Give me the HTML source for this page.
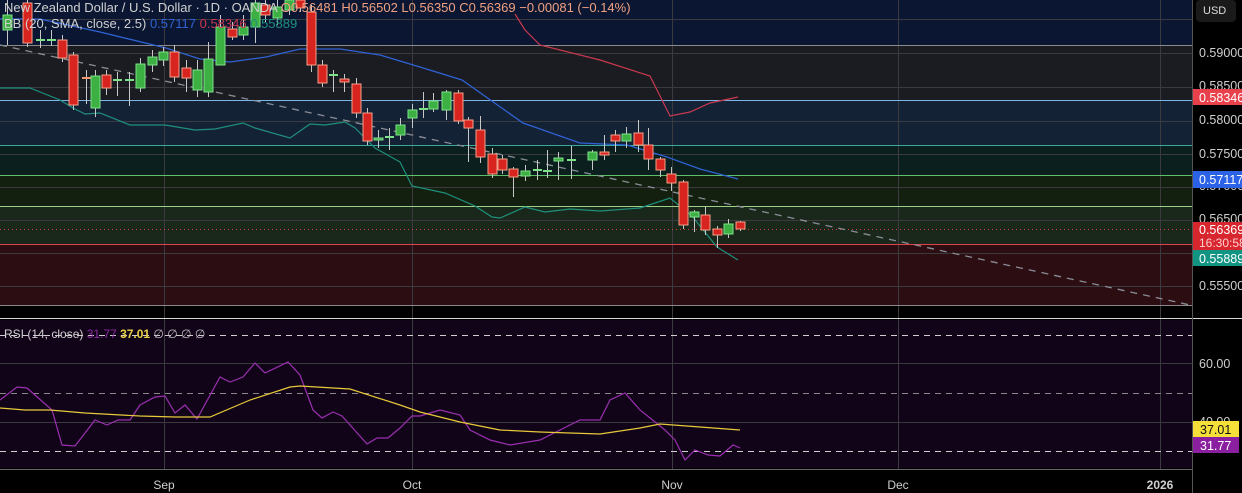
<!DOCTYPE html>
<html><head><meta charset="utf-8"><style>
html,body{margin:0;padding:0;background:#000;width:1242px;height:493px;overflow:hidden}
svg{display:block}
text{font-family:"Liberation Sans",sans-serif}
</style></head><body>
<svg id="s" width="1242" height="493" xmlns="http://www.w3.org/2000/svg">
<rect width="1242" height="493" fill="#000"/>
<rect x="0" y="0" width="1192" height="45" fill="#0b1732"/>
<rect x="0" y="45" width="1192" height="55" fill="#1a1c21"/>
<rect x="0" y="100" width="1192" height="45" fill="#142236"/>
<rect x="0" y="145" width="1192" height="30" fill="#0a1f1e"/>
<rect x="0" y="175" width="1192" height="31" fill="#13200f"/>
<rect x="0" y="206" width="1192" height="38" fill="#1a281b"/>
<rect x="0" y="244" width="1192" height="61" fill="#2c0d12"/>
<rect x="0" y="320" width="1192" height="148" fill="#110419"/>
<g stroke="#3a3a3f" stroke-width="1">
<line x1="0" y1="19.5" x2="1192" y2="19.5"/><line x1="0" y1="53.5" x2="1192" y2="53.5"/><line x1="0" y1="87.5" x2="1192" y2="87.5"/><line x1="0" y1="121.5" x2="1192" y2="121.5"/><line x1="0" y1="154.5" x2="1192" y2="154.5"/><line x1="0" y1="187.5" x2="1192" y2="187.5"/><line x1="0" y1="220.5" x2="1192" y2="220.5"/><line x1="0" y1="253.5" x2="1192" y2="253.5"/><line x1="0" y1="286.5" x2="1192" y2="286.5"/>
<line x1="0" y1="363.5" x2="1192" y2="363.5"/><line x1="0" y1="422.5" x2="1192" y2="422.5"/>
<line x1="164.5" y1="0" x2="164.5" y2="470"/><line x1="412.5" y1="0" x2="412.5" y2="470"/><line x1="672.5" y1="0" x2="672.5" y2="470"/><line x1="898.5" y1="0" x2="898.5" y2="470"/><line x1="1160.5" y1="0" x2="1160.5" y2="470"/>
</g>
<line x1="0" y1="45.5" x2="1192" y2="45.5" stroke="#8a8a8a"/>
<line x1="0" y1="100.5" x2="1192" y2="100.5" stroke="#7cb6e6"/>
<line x1="0" y1="145.5" x2="1192" y2="145.5" stroke="#3aa99a"/>
<line x1="0" y1="175.5" x2="1192" y2="175.5" stroke="#5fbf6a"/>
<line x1="0" y1="206.5" x2="1192" y2="206.5" stroke="#9ad08a"/>
<line x1="0" y1="244.5" x2="1192" y2="244.5" stroke="#e0424a"/>
<line x1="0" y1="305.5" x2="1192" y2="305.5" stroke="#8a8a8a"/>
<line x1="0" y1="229.5" x2="1192" y2="229.5" stroke="#d04040" stroke-dasharray="1 3"/>
<line x1="0" y1="318.5" x2="1242" y2="318.5" stroke="#d8d8d8"/>
<line x1="1192.5" y1="0" x2="1192.5" y2="493" stroke="#555"/>
<line x1="0" y1="469.5" x2="1192" y2="469.5" stroke="#666"/>
<g stroke="#cfcfcf" stroke-dasharray="6 5">
<line x1="0" y1="335.5" x2="1192" y2="335.5"/><line x1="0" y1="393.5" x2="1192" y2="393.5" stroke="#888"/><line x1="0" y1="451.5" x2="1192" y2="451.5"/>
</g>
<line x1="0" y1="45" x2="1190" y2="305" stroke="#8a8d96" stroke-width="1.3" stroke-dasharray="7 6"/>
<polyline fill="none" stroke="#2f62d4" stroke-width="1.3" points="0,19 40,19 100,32 133,40 166,48 200,59 230,62 266,57 300,49 340,49 380,55 420,67 462,80 523,123 580,143 627,145 667,157 700,169 738,179"/>
<polyline fill="none" stroke="#c9394f" stroke-width="1.2" points="515,14 525,30 540,45 600,60 650,76 670,116 690,112 710,103 738,97"/>
<polyline fill="none" stroke="#1f8f7c" stroke-width="1.2" points="0,88 30,88 60,100 73,108 85,114 100,113 130,125 165,125 195,130 215,129 243,123 255,128 290,138 310,124 325,125 345,122 355,128 375,148 400,162 412,186 445,193 475,206 492,217 500,218 525,207 545,212 570,209 600,211 640,208 670,198 692,216 717,247 738,260"/>
<g id="c"></g>
<polyline fill="none" stroke="#9b2fb0" stroke-width="1.2" points="0,400 17,387 27,388 52,410 62,445 75,446 95,420 107,425 118,420 130,420 140,405 155,397 165,396 175,413 185,405 197,419 220,377 230,382 243,377 255,363 265,373 288,362 300,375 313,410 322,418 333,412 342,416 367,444 377,438 388,438 400,428 412,416 420,416 440,410 460,415 470,430 490,440 510,445 540,440 560,430 580,420 600,420 610,400 625,393 640,410 665,430 675,440 685,460 695,450 708,455 720,456 733,445 740,448"/>
<polyline fill="none" stroke="#e8c93a" stroke-width="1.2" points="0,408 25,410 50,410 85,413 140,416 175,417 210,417 250,400 290,387 300,386 350,389 400,405 420,412 460,422 500,430 540,432 600,434 640,428 660,424 700,427 740,430"/>
<text x="4" y="12" font-size="13" fill="#d0d0d0">New Zealand Dollar / U.S. Dollar · 1D · OANDA  <tspan fill="#f0a080">O0.56481  H0.56502  L0.56350  C0.56369  −0.00081 (−0.14%)</tspan></text>
<text x="4" y="28" font-size="13" fill="#d0d0d0">BB (20, SMA, close, 2.5)  <tspan fill="#2f62d4">0.57117</tspan>  <tspan fill="#c9394f">0.58346</tspan>  <tspan fill="#1f8f7c">0.55889</tspan></text>
<text x="4" y="338" font-size="12" fill="#d0d0d0">RSI (14, close) <tspan fill="#8b2aa0">31.77</tspan> <tspan fill="#e8d040" font-weight="bold">37.01</tspan>  <tspan fill="#bbb">∅ ∅ ∅ ∅</tspan></text>
<rect x="1196" y="0" width="40" height="22" rx="4" fill="#1a1a1a"/>
<text x="1203" y="14" font-size="11" fill="#ddd">USD</text>
<g font-size="12.5" fill="#cfcfcf">
<text x="1199" y="57">0.59000</text><text x="1199" y="90">0.58500</text><text x="1199" y="124">0.58000</text><text x="1199" y="158">0.57500</text><text x="1199" y="190">0.57000</text><text x="1199" y="223">0.56500</text><text x="1199" y="290">0.55500</text><text x="1199" y="368">60.00</text><text x="1199" y="426">40.00</text>
</g>
<rect x="1193" y="89" width="49" height="16" fill="#e8414c"/><text x="1199" y="102" font-size="12.5" fill="#fff">0.58346</text>
<rect x="1193" y="171" width="49" height="17" fill="#2c62e6"/><text x="1199" y="184" font-size="12.5" fill="#fff">0.57117</text>
<rect x="1193" y="222" width="49" height="28" fill="#d8262e"/><text x="1199" y="234" font-size="12.5" fill="#fff">0.56369</text><text x="1199" y="247" font-size="12" fill="#ffd0d0">16:30:58</text>
<rect x="1193" y="250" width="49" height="16" fill="#129482"/><text x="1199" y="263" font-size="12.5" fill="#fff">0.55889</text>
<rect x="1193" y="421" width="46" height="16" fill="#f5e03a"/><text x="1200" y="434" font-size="12.5" fill="#111">37.01</text>
<rect x="1193" y="437" width="46" height="16" fill="#8a1fa0"/><text x="1200" y="450" font-size="12.5" fill="#fff">31.77</text>
<g font-size="12" fill="#cfcfcf" text-anchor="middle">
<text x="164" y="489">Sep</text><text x="412" y="489">Oct</text><text x="672" y="489">Nov</text><text x="898" y="489">Dec</text><text x="1160" y="489" font-weight="bold">2026</text>
</g>
</svg>
<script>
var C=[[7,15,30,0,45,'g'],[27,3,43,0,47,'r'],[40,40,40,30,48,'d'],[51,40,40,30,46,'d'],[62,40,58,35,62,'r'],[73,55,105,52,110,'r'],[86,78,96,70,104,'d2'],[95,76,108,70,117,'g'],[106,75,88,70,95,'r'],[117,80,80,72,96,'d'],[129,80,80,72,106,'d'],[140,64,88,58,92,'g'],[152,57,65,50,72,'g'],[163,52,60,47,66,'g'],[174,52,77,45,82,'r'],[186,68,78,60,92,'r'],[197,70,90,60,97,'g'],[208,59,92,42,97,'g'],[220,27,65,15,65,'g'],[232,29,37,22,40,'r'],[243,27,35,15,40,'g'],[255,3,27,0,43,'g'],[265,5,15,0,22,'r'],[277,7,18,0,25,'g'],[289,0,10,0,15,'g'],[300,0,8,0,12,'r'],[311,12,65,5,72,'r'],[322,65,83,60,87,'r'],[333,75,75,70,92,'d'],[344,79,82,74,92,'r'],[356,84,113,78,118,'r'],[367,113,141,108,145,'r'],[378,138,140,130,148,'g'],[389,137,137,128,150,'d'],[400,125,135,118,140,'g'],[412,110,118,104,128,'g'],[423,109,109,92,118,'d'],[433,101,109,93,112,'g'],[446,92,110,90,120,'g'],[458,93,121,90,124,'r'],[468,120,128,117,162,'r'],[480,130,157,116,163,'r'],[492,154,174,148,178,'r'],[502,159,170,155,174,'r'],[513,169,177,167,197,'r'],[525,171,176,165,181,'g'],[537,170,170,160,180,'d'],[547,171,171,150,178,'d'],[558,158,161,152,180,'g'],[571,160,160,146,179,'d'],[592,152,160,150,170,'g'],[604,152,155,135,160,'r'],[615,135,141,130,152,'r'],[626,134,141,127,148,'g'],[638,133,145,120,152,'r'],[648,145,159,128,170,'r'],[660,159,170,157,177,'r'],[671,174,183,167,191,'r'],[683,182,225,180,229,'r'],[694,212,217,210,232,'g'],[705,215,230,207,235,'r'],[717,229,235,226,248,'r'],[728,224,234,219,238,'g'],[740,222,229,221,231,'r']];
var g=document.getElementById('c'),h='';
C.forEach(function(c){var x=c[0],t=c[1],b=c[2],col=c[5];
var fill=col=='r'?'#d8241f':'#3cb043',st=col=='r'?'#f3a08a':'#7fe08a',wk='#c8c8c8';
h+='<line x1="'+(x+.5)+'" y1="'+c[3]+'" x2="'+(x+.5)+'" y2="'+c[4]+'" stroke="'+wk+'" stroke-width="1"/>';
if(col=='d'||col=='d2'){h+='<rect x="'+(x-4)+'" y="'+(t-1)+'" width="9" height="2" fill="'+(col=='d2'?'#f09a70':'#7fe08a')+'"/>';}
else h+='<rect x="'+(x-4)+'" y="'+t+'" width="9" height="'+Math.max(2,b-t)+'" fill="'+fill+'" stroke="'+st+'" stroke-width="1"/>';});
g.innerHTML=h;
</script>
</body></html>
